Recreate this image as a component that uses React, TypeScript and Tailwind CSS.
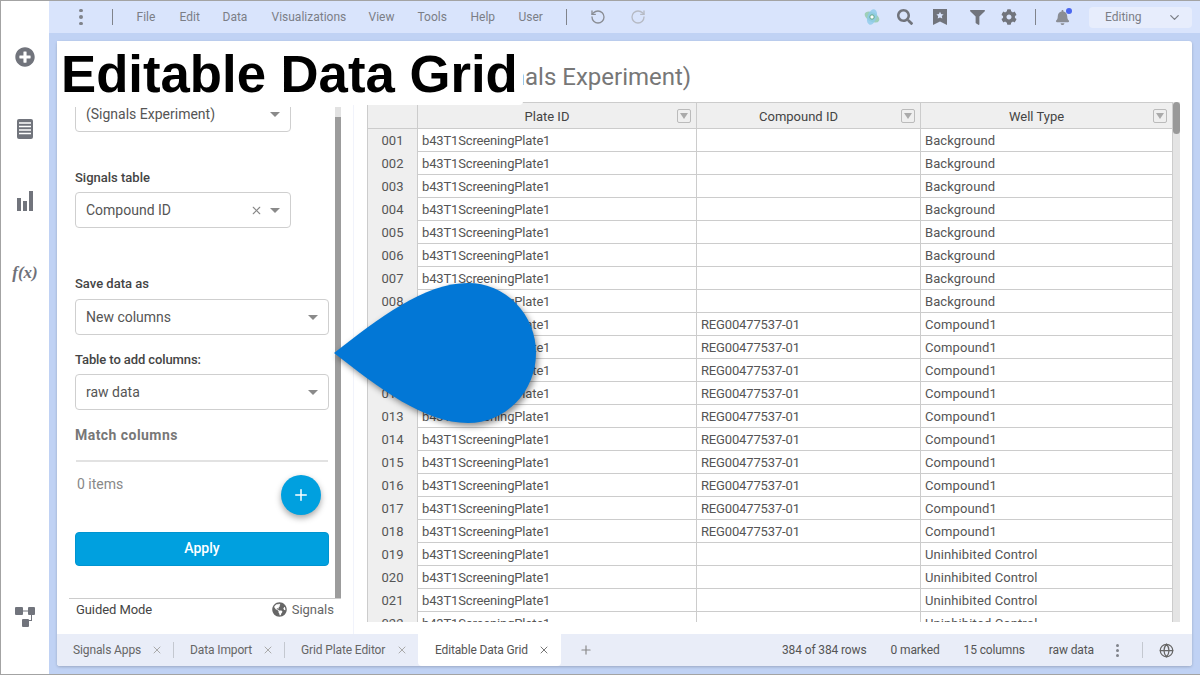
import { ChevronDown, Globe, Plus, RotateCcw, RotateCw, X } from "lucide-react";
import { FaBell, FaCog, FaFilter, FaGlobeAmericas, FaPlusCircle, FaSearch } from "react-icons/fa";

type IGridRow = {
    id: string;
    compound: string;
    wellType: string;
};

const menuItems = [
    { label: "File", width: "w-[43px]" },
    { label: "Edit", width: "w-[43px]" },
    { label: "Data", width: "w-[49px]" },
    { label: "Visualizations", width: "w-[97px]" },
    { label: "View", width: "w-[49px]" },
    { label: "Tools", width: "w-[53px]" },
    { label: "Help", width: "w-[48px]" },
    { label: "User", width: "w-[47px]" },
];

const makeRows = (): IGridRow[] => {
    const rows: IGridRow[] = [];
    for (let i = 1; i <= 22; i++) {
        let compound = "";
        let wellType = "Background";
        if (i >= 9 && i <= 18) {
            compound = "REG00477537-01";
            wellType = "Compound1";
        }
        if (i > 18) wellType = "Uninhibited Control";
        rows.push({ id: String(i).padStart(3, "0"), compound, wellType });
    }
    return rows;
};

const gridRows = makeRows();

const Caret = () => <span className="h-0 w-0 border-x-[5px] border-t-[5px] border-x-transparent border-t-[#8a8a8a]" />;

const SelectBox = ({ value, clearable, wide }: { value: string; clearable?: boolean; wide?: boolean }) => (
    <div
        className={`flex h-9 shrink-0 items-center rounded border border-[#cfcfcf] pr-[10px] pl-[10px] text-[14px] font-normal text-[#555] ${
            wide ? "w-[254px]" : "w-[216px]"
        }`}
    >
        <span className="flex-1">{value}</span>
        {clearable && <X size={13} className="mr-[7px] text-[#888]" />}
        <Caret />
    </div>
);

const HeaderCell = ({ label, filter = true }: { label?: string; filter?: boolean }) => (
    <div className="relative flex items-center justify-center border-r border-[#ccc] pt-[2px] pr-[20px] text-[13px] text-[#444]">
        {label}
        {filter && (
            <span className="absolute top-[6px] right-[5px] flex h-[14px] w-[14px] items-center justify-center rounded-[2px] border border-[#bbb]">
                <span className="h-0 w-0 border-x-[4px] border-t-[6px] border-x-transparent border-t-[#aaa]" />
            </span>
        )}
    </div>
);

const BottomTab = ({ label, width }: { label: string; width: string }) => (
    <div className={`flex h-[16px] items-center justify-between pr-[10px] ${width}`}>
        <span className="tracking-[-0.12px]">{label}</span>
        <X size={12} className="text-[#aaa]" />
    </div>
);

export default function App() {
    return (
        <div className="relative flex h-[675px] w-[1200px] overflow-hidden border-t border-b border-l border-[#a3a3a3] bg-white font-['Roboto',sans-serif]">
            {/* left rail */}
            <div className="flex w-[48px] shrink-0 flex-col items-center pt-[46px] text-[#71747c]">
                <FaPlusCircle size={20} />
                <svg className="mt-[52px]" width="16" height="20" viewBox="0 0 16 20">
                    <rect width="16" height="20" rx="2" fill="#71747c" />
                    <path d="M2 4h12M2 7.5h12M2 11h12M2 14.5h12" stroke="#fff" strokeWidth="1.3" />
                </svg>
                <svg className="mt-[52px]" width="16" height="20" viewBox="0 0 16 20" fill="#71747c">
                    <rect x="0" y="7" width="4" height="13" />
                    <rect x="6" y="10" width="4" height="10" />
                    <rect x="12" y="0" width="4" height="20" />
                </svg>
                <span className="mt-[49px] font-['Liberation_Serif',serif] text-[17px] font-bold text-[#6f7179] italic">
                    f(x)
                </span>
                <svg className="mt-auto mb-[47px]" width="20" height="20" viewBox="0 0 20 20" fill="#71747c">
                    <rect x="0" y="0" width="8" height="8" rx="1" />
                    <rect x="13" y="0" width="7" height="8" rx="1" />
                    <rect x="7" y="12" width="7" height="8" rx="1" />
                    <path d="M8 3.5h5v1H8zM16 8h1v6h-3v-1h2z" />
                </svg>
            </div>

            <div className="flex min-w-0 flex-1 flex-col bg-[#c0d2f4]">
                {/* top bar */}
                <div className="flex h-8 shrink-0 items-center bg-[#d9e4fc] pr-2 text-[12px] text-[#7b7e86]">
                    <span className="ml-[30px] flex flex-col gap-[3px]">
                        <span className="h-[3.5px] w-[3.5px] rounded-full bg-[#80838b]" />
                        <span className="h-[3.5px] w-[3.5px] rounded-full bg-[#80838b]" />
                        <span className="h-[3.5px] w-[3.5px] rounded-full bg-[#80838b]" />
                    </span>
                    <span className="ml-[29px] h-4 w-px bg-[#80838b]" />
                    <div className="ml-6 flex">
                        {menuItems.map((item) => (
                            <span className={item.width} key={item.label}>
                                {item.label}
                            </span>
                        ))}
                    </div>
                    <span className="h-4 w-px bg-[#80838b]" />
                    <RotateCcw size={16} className="ml-[23px] text-[#8a8d94]" />
                    <RotateCw size={16} className="ml-[24px] text-[#b6bac4]" />
                    <svg className="ml-auto" width="18" height="18" viewBox="0 0 18 18">
                        <ellipse cx="9" cy="9" rx="8" ry="4.5" fill="#8fc9a8" opacity="0.8" transform="rotate(30 9 9)" />
                        <ellipse cx="9" cy="9" rx="8" ry="4.5" fill="#8ccbea" opacity="0.8" transform="rotate(110 9 9)" />
                        <circle cx="9" cy="9" r="2.2" fill="#fff" stroke="#5fa888" />
                    </svg>
                    <FaSearch size={16} className="ml-[16px] text-[#71747c]" />
                    <svg className="ml-[20px]" width="14" height="16" viewBox="0 0 14 16">
                        <path d="M0 0h14v16l-7-3.6L0 16z" fill="#71747c" />
                        <path
                            d="M7 2.8l1.1 2.3 2.5.3-1.8 1.7.5 2.5L7 8.4 4.7 9.6l.5-2.5-1.8-1.7 2.5-.3z"
                            fill="#d9e4fc"
                        />
                    </svg>
                    <FaFilter size={15} className="ml-[23px] text-[#71747c]" />
                    <FaCog size={16} className="ml-[16px] text-[#71747c]" />
                    <span className="ml-[18px] h-4 w-px bg-[#80838b]" />
                    <span className="relative ml-[19px]">
                        <FaBell size={15} className="text-[#8a8d94]" />
                        <span className="absolute -top-[2px] -right-[2px] h-[6px] w-[6px] rounded-full bg-[#4a66f0]" />
                    </span>
                    <div className="ml-[19px] flex h-[21px] w-[103px] items-center justify-between rounded bg-[#e7edfc] pr-[10px] pl-[16px]">
                        <span>Editing</span>
                        <ChevronDown size={15} />
                    </div>
                </div>

                {/* panel */}
                <div className="mx-2 mt-2 mb-[8px] flex min-h-0 flex-1 flex-col rounded-[3px] bg-white shadow-[0_1px_3px_rgba(0,0,0,0.2)]">
                    <div className="relative flex min-h-0 flex-1">
                        <div className="flex w-[297px] shrink-0 flex-col border-r border-[#f1f3fb] pt-[66px]">
                            <div className="ml-3 flex h-[491px] w-[272px] overflow-hidden">
                                <div className="w-[266px] pr-[6px] pl-[6px] text-[13px] font-medium text-[#444]">
                                    <div className="-mt-[11px]">
                                        <SelectBox value="(Signals Experiment)" />
                                    </div>
                                    <div className="mt-[38px] leading-4">Signals table</div>
                                    <div className="mt-[6px]">
                                        <SelectBox value="Compound ID" clearable />
                                    </div>
                                    <div className="mt-[48px] leading-4">Save data as</div>
                                    <div className="mt-[7px]">
                                        <SelectBox value="New columns" wide />
                                    </div>
                                    <div className="mt-[17px] leading-4 tracking-[-0.1px]">Table to add columns:</div>
                                    <div className="mt-[6px]">
                                        <SelectBox value="raw data" wide />
                                    </div>
                                    <div className="mt-[17px] text-[14px] leading-4 font-bold tracking-[0.45px] text-[#777]">
                                        Match columns
                                    </div>
                                    <div className="mt-[17px] ml-px h-[2px] w-[252px] bg-[#e2e2e2]" />
                                    <div className="flex justify-between pr-2">
                                        <span className="mt-[14px] ml-[2px] text-[14px] leading-4 font-normal text-[#888]">
                                            0 items
                                        </span>
                                        <button className="mt-[13px] flex h-10 w-10 items-center justify-center rounded-full bg-[#00a0df] text-white shadow-[0_3px_6px_rgba(0,0,0,0.35)]">
                                            <Plus size={18} />
                                        </button>
                                    </div>
                                    <button className="mt-[17px] h-[34px] w-[254px] rounded border border-[#0094d0] bg-[#00a0df] pb-[2px] text-[14px] font-medium text-white">
                                        Apply
                                    </button>
                                </div>
                                <div className="w-[6px] bg-[#e2e2e2] pt-[10px]">
                                    <div className="h-full bg-[#9c9c9c]" />
                                </div>
                            </div>
                            <div className="ml-3 flex w-[272px] items-center justify-between border-t border-[#ccc] pt-[1px] pr-[7px] pl-[7px] text-[13px] text-[#444]">
                                <span className="tracking-[-0.08px]">Guided Mode</span>
                                <span className="flex items-center gap-[5px] text-[#666]">
                                    <FaGlobeAmericas size={15} className="text-[#666]" />
                                    Signals
                                </span>
                            </div>
                        </div>

                        {/* grid */}
                        <div className="flex min-w-0 flex-1 flex-col pl-[13px]">
                            <div className="flex h-[61px] shrink-0 items-center pl-[103px] text-[24px] text-[#777]">
                                <span className="mt-[11px]">(Signals Experiment)</span>
                            </div>
                            <div className="flex h-[520px] overflow-hidden">
                                <div className="w-[806px] border-l border-[#ccc] text-[13px] text-[#555]">
                                    <div className="grid h-[27px] grid-cols-[50px_279px_224px_252px] border-y border-[#ccc] bg-[#efefef]">
                                        <HeaderCell filter={false} />
                                        <HeaderCell label="Plate ID" />
                                        <HeaderCell label="Compound ID" />
                                        <HeaderCell label="Well Type" />
                                    </div>
                                    {gridRows.map((row) => (
                                        <div
                                            className="grid h-[23px] grid-cols-[50px_279px_224px_252px] border-b border-[#ccc]"
                                            key={row.id}
                                        >
                                            <div className="border-r border-[#ccc] bg-[#efefef] text-center leading-[24px]">
                                                {row.id}
                                            </div>
                                            <div className="border-r border-[#ccc] pl-1 leading-[24px] tracking-[-0.15px]">
                                                b43T1ScreeningPlate1
                                            </div>
                                            <div className="border-r border-[#ccc] pl-1 leading-[24px] tracking-[-0.15px]">
                                                {row.compound}
                                            </div>
                                            <div className="border-r border-[#ccc] pl-1 leading-[24px] tracking-[0.1px]">
                                                {row.wellType}
                                            </div>
                                        </div>
                                    ))}
                                </div>
                                <div className="h-full w-[7px] bg-[#e4e4e4]">
                                    <div className="h-[32px] rounded-full bg-[#999]" />
                                </div>
                            </div>
                        </div>

                        {/* title overlay */}
                        <div className="absolute top-0 left-0 flex h-[64px] w-[466px] items-center rounded-br bg-white pt-[2px] pl-[4px] font-['Liberation_Sans',sans-serif] text-[52.7px] font-bold text-black">
                            Editable Data Grid
                        </div>
                    </div>

                    {/* tabs */}
                    <div className="flex h-8 shrink-0 items-center rounded-b-[3px] bg-[#e9edf8] text-[12px] text-[#666]">
                        <div className="ml-4 flex items-center">
                            <BottomTab label="Signals Apps" width="w-[101px] border-r border-[#c4c8d0]" />
                            <div className="w-[16px]" />
                            <BottomTab label="Data Import" width="w-[95px] border-r border-[#c4c8d0]" />
                            <div className="w-[16px]" />
                            <BottomTab label="Grid Plate Editor" width="w-[117px]" />
                        </div>
                        <div className="flex h-8 w-[143px] items-center justify-between rounded-b bg-white pr-[11px] pl-[17px] text-[#555]">
                            <span className="tracking-[-0.15px]">Editable Data Grid</span>
                            <X size={12} className="text-[#777]" />
                        </div>
                        <Plus size={14} className="ml-[18px] text-[#888]" />
                        <div className="ml-auto flex items-center pr-[18px] tracking-[-0.12px] text-[#555]">
                            <span>384 of 384 rows</span>
                            <span className="ml-6">0 marked</span>
                            <span className="ml-6">15 columns</span>
                            <span className="ml-6">raw data</span>
                            <span className="ml-[22px] flex flex-col gap-[2px]">
                                <span className="h-[3px] w-[3px] rounded-full bg-[#80838b]" />
                                <span className="h-[3px] w-[3px] rounded-full bg-[#80838b]" />
                                <span className="h-[3px] w-[3px] rounded-full bg-[#80838b]" />
                            </span>
                            <span className="ml-[23px] h-4 w-px bg-[#c4c8d0]" />
                            <Globe size={15} className="ml-4 text-[#666]" />
                        </div>
                    </div>
                </div>
            </div>

            {/* callout drop */}
            <svg
                className="absolute top-[282px] left-[333px] drop-shadow-[2px_3px_3px_rgba(0,0,0,0.45)]"
                width="203"
                height="141"
                viewBox="0 0 203 141"
            >
                <path d="M0 70C45 35 90 0 134 0A68 70 0 0 1 134 140C90 140 45 105 0 70Z" fill="#0277d6" />
            </svg>
        </div>
    );
}
